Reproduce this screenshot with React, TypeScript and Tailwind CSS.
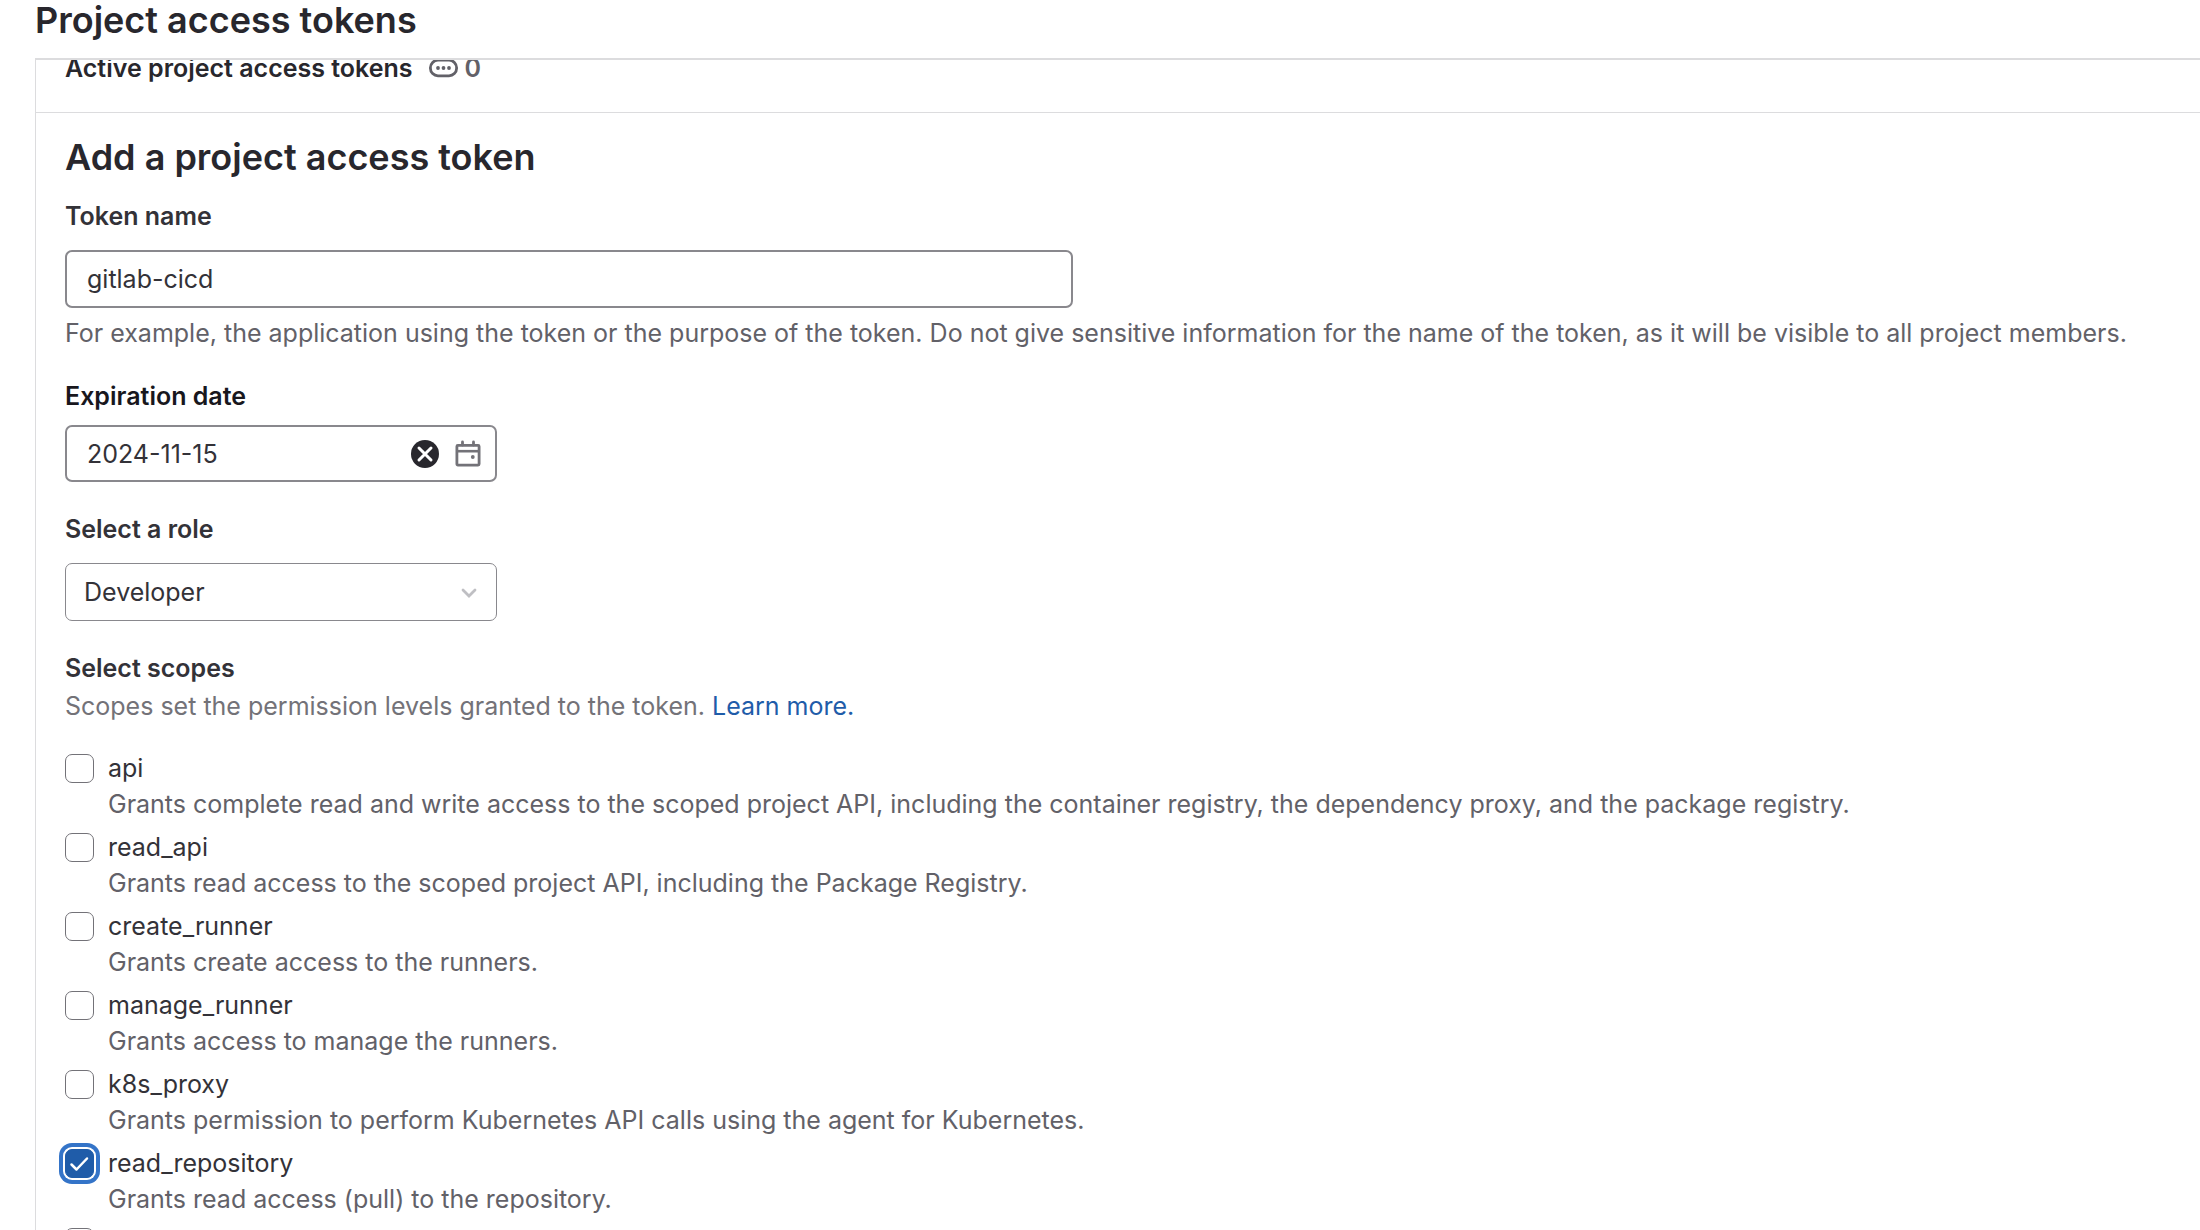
import { useState } from "react";

type Scope = { id: string; description: string };

const scopes: Scope[] = [
  {
    id: "api",
    description:
      "Grants complete read and write access to the scoped project API, including the container registry, the dependency proxy, and the package registry.",
  },
  {
    id: "read_api",
    description: "Grants read access to the scoped project API, including the Package Registry.",
  },
  { id: "create_runner", description: "Grants create access to the runners." },
  { id: "manage_runner", description: "Grants access to manage the runners." },
  {
    id: "k8s_proxy",
    description: "Grants permission to perform Kubernetes API calls using the agent for Kubernetes.",
  },
  { id: "read_repository", description: "Grants read access (pull) to the repository." },
  { id: "write_repository", description: "Grants read and write access (pull and push) to the repository." },
];

function TokenIcon() {
  return (
    <svg className="h-5 w-[29px] text-[#626168]" viewBox="0 0 29 20" fill="none" aria-hidden="true">
      <rect x="1.4" y="2.2" width="26.2" height="15.6" rx="7.6" stroke="currentColor" strokeWidth="2.8" />
      <circle cx="9" cy="10" r="1.9" fill="currentColor" />
      <circle cx="14.5" cy="10" r="1.9" fill="currentColor" />
      <circle cx="20" cy="10" r="1.9" fill="currentColor" />
    </svg>
  );
}

function ClearIcon() {
  return (
    <svg className="size-7" viewBox="0 0 28 28" fill="none" aria-hidden="true">
      <circle cx="14" cy="14" r="14" fill="#28272d" />
      <path d="M8 8l12 12M20 8L8 20" stroke="#fff" strokeWidth="3" strokeLinecap="round" />
    </svg>
  );
}

function CalendarIcon() {
  return (
    <svg className="size-7 text-[#737278]" viewBox="0 0 28 28" fill="none" aria-hidden="true">
      <rect x="2.9" y="5.4" width="22.2" height="19.7" rx="1" stroke="currentColor" strokeWidth="2.8" />
      <path d="M2.5 11.2h23" stroke="currentColor" strokeWidth="2.6" />
      <path d="M8.5 2v3M19.5 2v3" stroke="currentColor" strokeWidth="2.8" strokeLinecap="round" />
      <circle cx="18.8" cy="17" r="1.9" fill="currentColor" />
    </svg>
  );
}

function ScopeOption({ scope, checked, onToggle }: { scope: Scope; checked: boolean; onToggle: () => void }) {
  return (
    <li className="flex gap-3.5">
      <span className="relative mt-1 size-[29px] shrink-0">
        <input
          id={scope.id}
          type="checkbox"
          checked={checked}
          onChange={onToggle}
          aria-describedby={`${scope.id}-help`}
          className="block size-[29px] appearance-none rounded-[7px] border border-[#737278] bg-white outline-none checked:border-[#1f5ca9] checked:bg-[#1f5ca9] checked:shadow-[0_0_0_2px_#fff,0_0_0_6px_#3474c8]"
        />
        {checked && (
          <svg className="pointer-events-none absolute inset-0 size-[29px]" viewBox="0 0 29 29" fill="none" aria-hidden="true">
            <path d="M6.5 15.5l5 5L22 9.5" stroke="#fff" strokeWidth="2.5" strokeLinecap="round" strokeLinejoin="round" />
          </svg>
        )}
      </span>
      <div>
        <label htmlFor={scope.id} className="block w-fit">
          {scope.id}
        </label>
        <p id={`${scope.id}-help`} className="text-[#626168]">
          {scope.description}
        </p>
      </div>
    </li>
  );
}

export default function App() {
  const [name, setName] = useState("gitlab-cicd");
  const [date, setDate] = useState("2024-11-15");
  const [role, setRole] = useState("Developer");
  const [selected, setSelected] = useState<string[]>(["read_repository"]);

  const toggle = (id: string) =>
    setSelected((ids) => (ids.includes(id) ? ids.filter((x) => x !== id) : [...ids, id]));

  return (
    <main className="flex h-screen flex-col overflow-hidden bg-white pl-[35px] font-['Inter',sans-serif] text-[25px] leading-9 text-[#333238]">
      <h1 className="text-4xl leading-10 font-semibold text-[#28272d]">Project access tokens</h1>

      <section className="mt-[18px] shrink-0 border-t-2 border-l border-[#dcdcde]">
        <header className="flex items-center gap-4 overflow-hidden border-b border-[#dcdcde] pb-9 pl-[29px] leading-4 font-semibold text-[#28272d]">
          <h2>Active project access tokens</h2>
          <span className="-my-1 flex items-center gap-[7px] text-[#626168]">
            <TokenIcon />0
          </span>
        </header>

        <form className="pt-6 pl-[29px]" onSubmit={(e) => e.preventDefault()}>
          <h2 className="text-4xl leading-10 font-semibold text-[#28272d]">Add a project access token</h2>

          <label htmlFor="token-name" className="mt-[21px] block font-semibold">
            Token name
          </label>
          <input
            id="token-name"
            value={name}
            onChange={(e) => setName(e.target.value)}
            className="mt-4 block h-[58px] w-full max-w-[1008px] rounded-[7px] border-2 border-[#89888d] px-5 outline-none"
          />
          <p className="mt-[7px] text-[#626168]">
            For example, the application using the token or the purpose of the token. Do not give sensitive information
            for the name of the token, as it will be visible to all project members.
          </p>

          <label htmlFor="expiration" className="mt-[27px] block font-semibold text-[#18171d]">
            Expiration date
          </label>
          <div className="mt-[11px] flex h-[57px] max-w-[432px] items-center gap-[15px] rounded-[7px] border-2 border-[#89888d] pr-[13px] pl-5">
            <input
              id="expiration"
              value={date}
              onChange={(e) => setDate(e.target.value)}
              className="min-w-0 flex-1 outline-none"
            />
            <button type="button" aria-label="Clear date" onClick={() => setDate("")}>
              <ClearIcon />
            </button>
            <button type="button" aria-label="Open calendar">
              <CalendarIcon />
            </button>
          </div>

          <label htmlFor="role" className="mt-[29px] block font-semibold">
            Select a role
          </label>
          <div className="relative mt-4 max-w-[432px]">
            <select
              id="role"
              value={role}
              onChange={(e) => setRole(e.target.value)}
              className="block h-[58px] w-full appearance-none rounded-[7px] border border-[#89888d] bg-white px-[18px] outline-none"
            >
              <option>Guest</option>
              <option>Reporter</option>
              <option>Developer</option>
              <option>Maintainer</option>
              <option>Owner</option>
            </select>
            <svg
              className="pointer-events-none absolute top-[22px] right-5 size-4"
              viewBox="0 0 16 16"
              fill="none"
              aria-hidden="true"
            >
              <path d="M2 5l6 6 6-6" stroke="#bfbfc3" strokeWidth="2.8" strokeLinecap="round" strokeLinejoin="miter" />
            </svg>
          </div>

          <fieldset className="mt-[29px]">
            <legend className="font-semibold">Select scopes</legend>
            <p className="mt-0.5 text-[#737278]">
              Scopes set the permission levels granted to the token.{" "}
              <a href="#scopes" className="text-[#1f5ca9]">
                Learn more.
              </a>
            </p>
            <ul className="mt-[26px] flex flex-col gap-[7px]">
              {scopes.map((scope) => (
                <ScopeOption
                  key={scope.id}
                  scope={scope}
                  checked={selected.includes(scope.id)}
                  onToggle={() => toggle(scope.id)}
                />
              ))}
            </ul>
          </fieldset>
        </form>
      </section>
    </main>
  );
}
